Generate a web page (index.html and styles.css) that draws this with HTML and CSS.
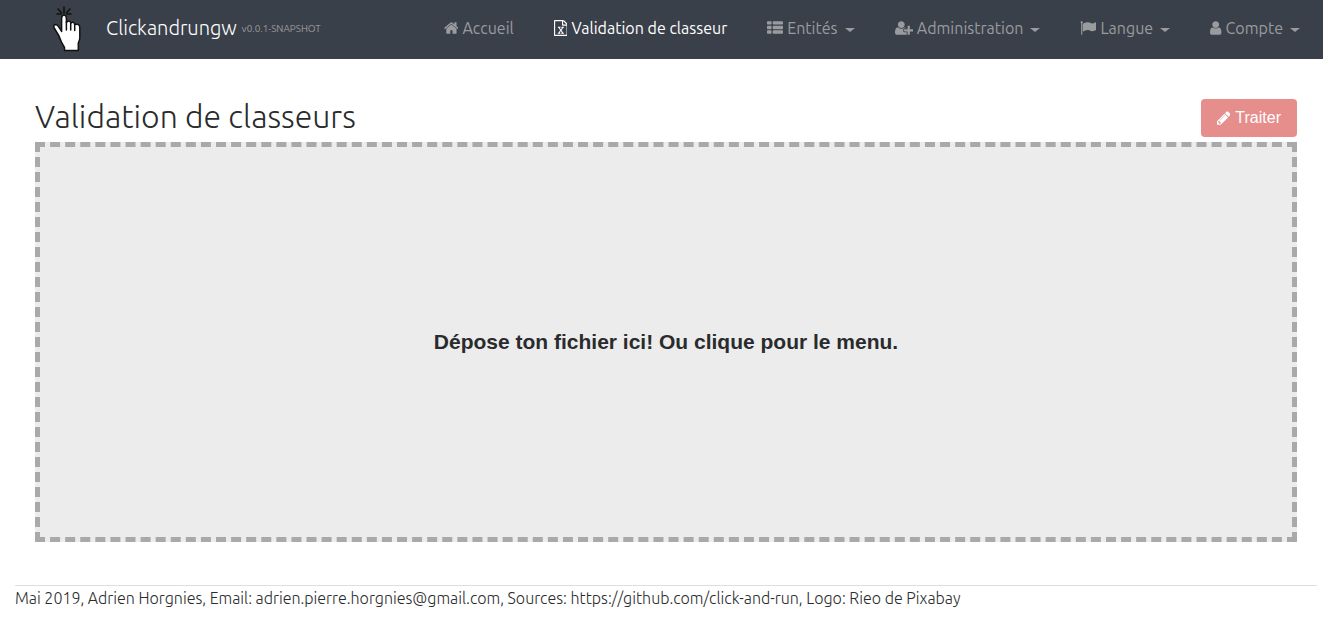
FILE: index.html
```html
<!DOCTYPE html>
<html lang="fr">
<head>
<meta charset="utf-8">
<title>Validation de classeurs</title>
<meta name="viewport" content="width=device-width, initial-scale=1">
<link rel="stylesheet" href="styles.css">
</head>
<body>
<header class="navbar">
  <a class="brand" href="#">
    <svg class="brand-logo" viewBox="0 0 30 48" aria-hidden="true">
      <g stroke="#111" stroke-width="1.6" stroke-linecap="round">
        <path d="M12 7V1M9.500 6.800L6 3M14.500 6.800L18 3M9 8H5M15 8H19"/>
      </g>
      <path d="M9.600 12.500Q9.600 9 12 9Q14.400 9 14.400 12.500V16.500Q18 13.500 18.700 17Q22 15 22.700 18.500Q27.800 17 27.800 22V32Q27.800 34 26.300 37V44.500H12.500V41.500Q9 36 7 30L2.500 22.500Q0.500 18.500 4 18.500Q6 19 9.600 25.500Z" fill="#fff" stroke="#111" stroke-width="1.500" stroke-linejoin="round"/>
      <path d="M14.400 16V24M18.700 17V24M22.700 18.500V24.500" stroke="#111" stroke-width="1.500" stroke-linecap="round"/>
    </svg>
    <span class="brand-name">Clickandrungw</span>
    <span class="brand-version">v0.0.1-SNAPSHOT</span>
  </a>
  <nav class="nav" aria-label="Navigation principale">
    <a class="nav-link" href="#"><svg class="icon" viewBox="0 0 1664 1792" aria-hidden="true"><path d="M1408 992v480q0 26-19 45t-45 19h-384v-384h-256v384h-384q-26 0-45-19t-19-45v-480q0-1 .5-3t.5-3l575-474 575 474q1 2 1 6zm223-69l-62 74q-8 9-21 11h-3q-13 0-21-7l-692-577-692 577q-12 8-24 7-13-2-21-11l-62-74q-8-10-7-23.500t11-21.500l719-599q32-26 76-26t76 26l244 204v-195q0-14 9-23t23-9h192q14 0 23 9t9 23v408l219 182q10 8 11 21.500t-7 23.500z"/></svg><span>Accueil</span></a>
    <a class="nav-link nav-link-active" href="#" aria-current="page"><svg class="icon" viewBox="0 0 1536 1792" aria-hidden="true"><path d="M1468 380q28 28 48 76t20 88v1152q0 40-28 68t-68 28h-1344q-40 0-68-28t-28-68v-1600q0-40 28-68t68-28h896q40 0 88 20t76 48zm-444-244v376h376q-10-29-22-41l-313-313q-12-12-41-22zm384 1528v-1024h-416q-40 0-68-28t-28-68v-416h-768v1536h1280zm-979-234v106h281v-106h-75l103-161q5-7 10-16.500t7.500-13.500 3.500-4h2q1 4 5 10 2 4 4.500 7.500t6 8 6.500 8.500l107 161h-76v106h291v-106h-68l-192-273 195-282h67v-107h-279v107h74l-103 159q-4 7-10 16.500t-9 13.500l-2 3h-2q-1-4-5-10-6-11-17-23l-106-159h76v-107h-290v107h68l189 272-194 283h-68z"/></svg><span>Validation de classeur</span></a>
    <button class="nav-link nav-toggle" type="button" aria-haspopup="true"><svg class="icon" viewBox="0 0 1792 1792" aria-hidden="true"><path d="M512 1248v192q0 40-28 68t-68 28h-320q-40 0-68-28t-28-68v-192q0-40 28-68t68-28h320q40 0 68 28t28 68zm0-512v192q0 40-28 68t-68 28h-320q-40 0-68-28t-28-68v-192q0-40 28-68t68-28h320q40 0 68 28t28 68zm1280 512v192q0 40-28 68t-68 28h-960q-40 0-68-28t-28-68v-192q0-40 28-68t68-28h960q40 0 68 28t28 68zm-1280-1024v192q0 40-28 68t-68 28h-320q-40 0-68-28t-28-68v-192q0-40 28-68t68-28h320q40 0 68 28t28 68zm1280 512v192q0 40-28 68t-68 28h-960q-40 0-68-28t-28-68v-192q0-40 28-68t68-28h960q40 0 68 28t28 68zm0-512v192q0 40-28 68t-68 28h-960q-40 0-68-28t-28-68v-192q0-40 28-68t68-28h960q40 0 68 28t28 68z"/></svg><span>Entités</span></button>
    <button class="nav-link nav-toggle" type="button" aria-haspopup="true"><svg class="icon" viewBox="0 0 2048 1792" aria-hidden="true"><path d="M704 896q-159 0-271.500-112.500t-112.500-271.500 112.500-271.500 271.500-112.500 271.500 112.500 112.500 271.500-112.500 271.500-271.500 112.500zm960 128h352q13 0 22.500 9.500t9.500 22.500v192q0 13-9.500 22.500t-22.500 9.500h-352v352q0 13-9.500 22.500t-22.500 9.500h-192q-13 0-22.500-9.500t-9.500-22.500v-352h-352q-13 0-22.500-9.500t-9.500-22.500v-192q0-13 9.500-22.500t22.500-9.500h352v-352q0-13 9.500-22.500t22.500-9.500h192q13 0 22.500 9.500t9.500 22.500v352zm-736 224q0 52 38 90t90 38h256v238q-68 50-171 50h-874q-121 0-194-69t-73-190q0-53 3.500-103.500t14-109 26.500-108.500 43-97.500 62-81 85.500-53.500 111.500-20q19 0 39 17 79 61 154.500 91.500t164.500 30.500 164.500-30.500 154.500-91.500q20-17 39-17 132 0 217 96h-223q-52 0-90 38t-38 90v192z"/></svg><span>Administration</span></button>
    <button class="nav-link nav-toggle" type="button" aria-haspopup="true"><svg class="icon" viewBox="0 0 1792 1792" aria-hidden="true"><path d="M320 256q0 72-64 110v1266q0 13-9.500 22.500t-22.500 9.500h-64q-13 0-22.500-9.500t-9.500-22.500v-1266q-64-38-64-110 0-53 37.500-90.500t90.500-37.500 90.500 37.500 37.500 90.500zm1472 64v763q0 25-12.500 38.500t-39.500 27.500q-215 116-369 116-61 0-123.500-22t-108.500-48-115.500-48-142.500-22q-192 0-464 146-17 9-33 9-26 0-45-19t-19-45v-742q0-32 31-55 21-14 79-43 236-120 421-120 107 0 200 29t219 88q38 19 88 19 54 0 117.500-21t110-47 88-47 54.500-21q26 0 45 19t19 45z"/></svg><span>Langue</span></button>
    <button class="nav-link nav-toggle" type="button" aria-haspopup="true"><svg class="icon" viewBox="0 0 1280 1792" aria-hidden="true"><path d="M1280 1399q0 109-62.500 187t-150.500 78h-854q-88 0-150.500-78t-62.500-187q0-85 8.500-160.500t31.500-152 58.500-131 94-89 134.500-34.500q131 128 313 128t313-128q76 0 134.500 34.500t94 89 58.500 131 31.500 152 8.500 160.500zm-256-887q0 159-112.500 271.500t-271.500 112.500-271.500-112.500-112.500-271.500 112.500-271.500 271.500-112.500 271.500 112.500 112.500 271.500z"/></svg><span>Compte</span></button>
  </nav>
</header>
<main class="content">
  <div class="page-head">
    <h1 class="page-title">Validation de classeurs</h1>
    <button class="btn-process" type="button" disabled><svg class="icon" viewBox="0 0 1536 1792" aria-hidden="true"><path d="M363 1536l91-91-235-235-91 91v107h128v128h107zm523-928q0-22-22-22-10 0-17 7l-542 542q-7 7-7 17 0 22 22 22 10 0 17-7l542-542q7-7 7-17zm-54-192l416 416-832 832h-416v-416zm683 96q0 53-37 90l-166 166-416-416 166-165q36-38 90-38 53 0 91 38l235 234q37 39 37 91z"/></svg><span>Traiter</span></button>
  </div>
  <button class="dropzone" type="button">Dépose ton fichier ici! Ou clique pour le menu.</button>
</main>
<footer class="footer">
  <p class="footer-text">Mai 2019, Adrien Horgnies, Email: adrien.pierre.horgnies@gmail.com, Sources: https://github.com/click-and-run, Logo: Rieo de Pixabay</p>
</footer>
</body>
</html>
```
FILE: styles.css
```css
* { box-sizing: border-box; }

body {
  margin: 0;
  background: #fff;
  color: #292b2c;
  font-family: Ubuntu, "Noto Sans", sans-serif;
  font-size: 16px;
  font-weight: 300;
  line-height: 24px;
}

.navbar {
  display: flex;
  align-items: center;
  justify-content: space-between;
  min-height: 59px;
  padding: 0 23px 4px 52px;
  background: #3a404a;
}

.brand {
  display: flex;
  align-items: center;
  color: #fff;
  text-decoration: none;
  white-space: nowrap;
}

.brand-logo {
  width: 30px;
  height: 48px;
  margin: 4px 24px 0 0;
  fill: none;
}

.brand-name {
  margin-right: 5px;
  font-size: 20px;
}

.brand-version {
  margin-top: 2px;
  color: #aaa;
  font-size: 10px;
}

.nav {
  display: flex;
  gap: 40px;
}

.nav-link {
  display: flex;
  align-items: center;
  gap: 4px;
  padding: 0;
  border: 0;
  background: none;
  color: #999b9f;
  font: inherit;
  font-weight: 400;
  text-decoration: none;
  white-space: nowrap;
}

.nav-link-active { color: #fff; }

.nav-toggle { cursor: pointer; }

.nav-toggle::after {
  content: "";
  margin: 4px 0 0 3px;
  border: 5px solid transparent;
  border-top: 4px solid currentColor;
  border-bottom: 0;
}

.icon {
  height: 16px;
  fill: currentColor;
}

.content { padding: 40px 26px 0 35px; }

.page-head {
  display: flex;
  align-items: flex-start;
  justify-content: space-between;
  margin-bottom: 5px;
}

.page-title {
  margin: 0;
  font-size: 32px;
  font-weight: 300;
  line-height: 35px;
}

.btn-process {
  display: flex;
  align-items: center;
  gap: 5px;
  padding: 7px 16px;
  border: 0;
  border-radius: 4px;
  background: #e68e8b;
  color: #fff;
  font: 16px/24px "Liberation Sans", sans-serif;
}

.dropzone {
  display: block;
  width: 100%;
  height: 400px;
  border: 5px dashed #a9a9a9;
  background: #ececec;
  color: #292b2c;
  font: bold 21px/24px "Liberation Sans", sans-serif;
  cursor: pointer;
}

.footer {
  margin: 43px 6px 0 15px;
  border-top: 1px solid #dedede;
}

.footer-text { margin: 0; }
```
